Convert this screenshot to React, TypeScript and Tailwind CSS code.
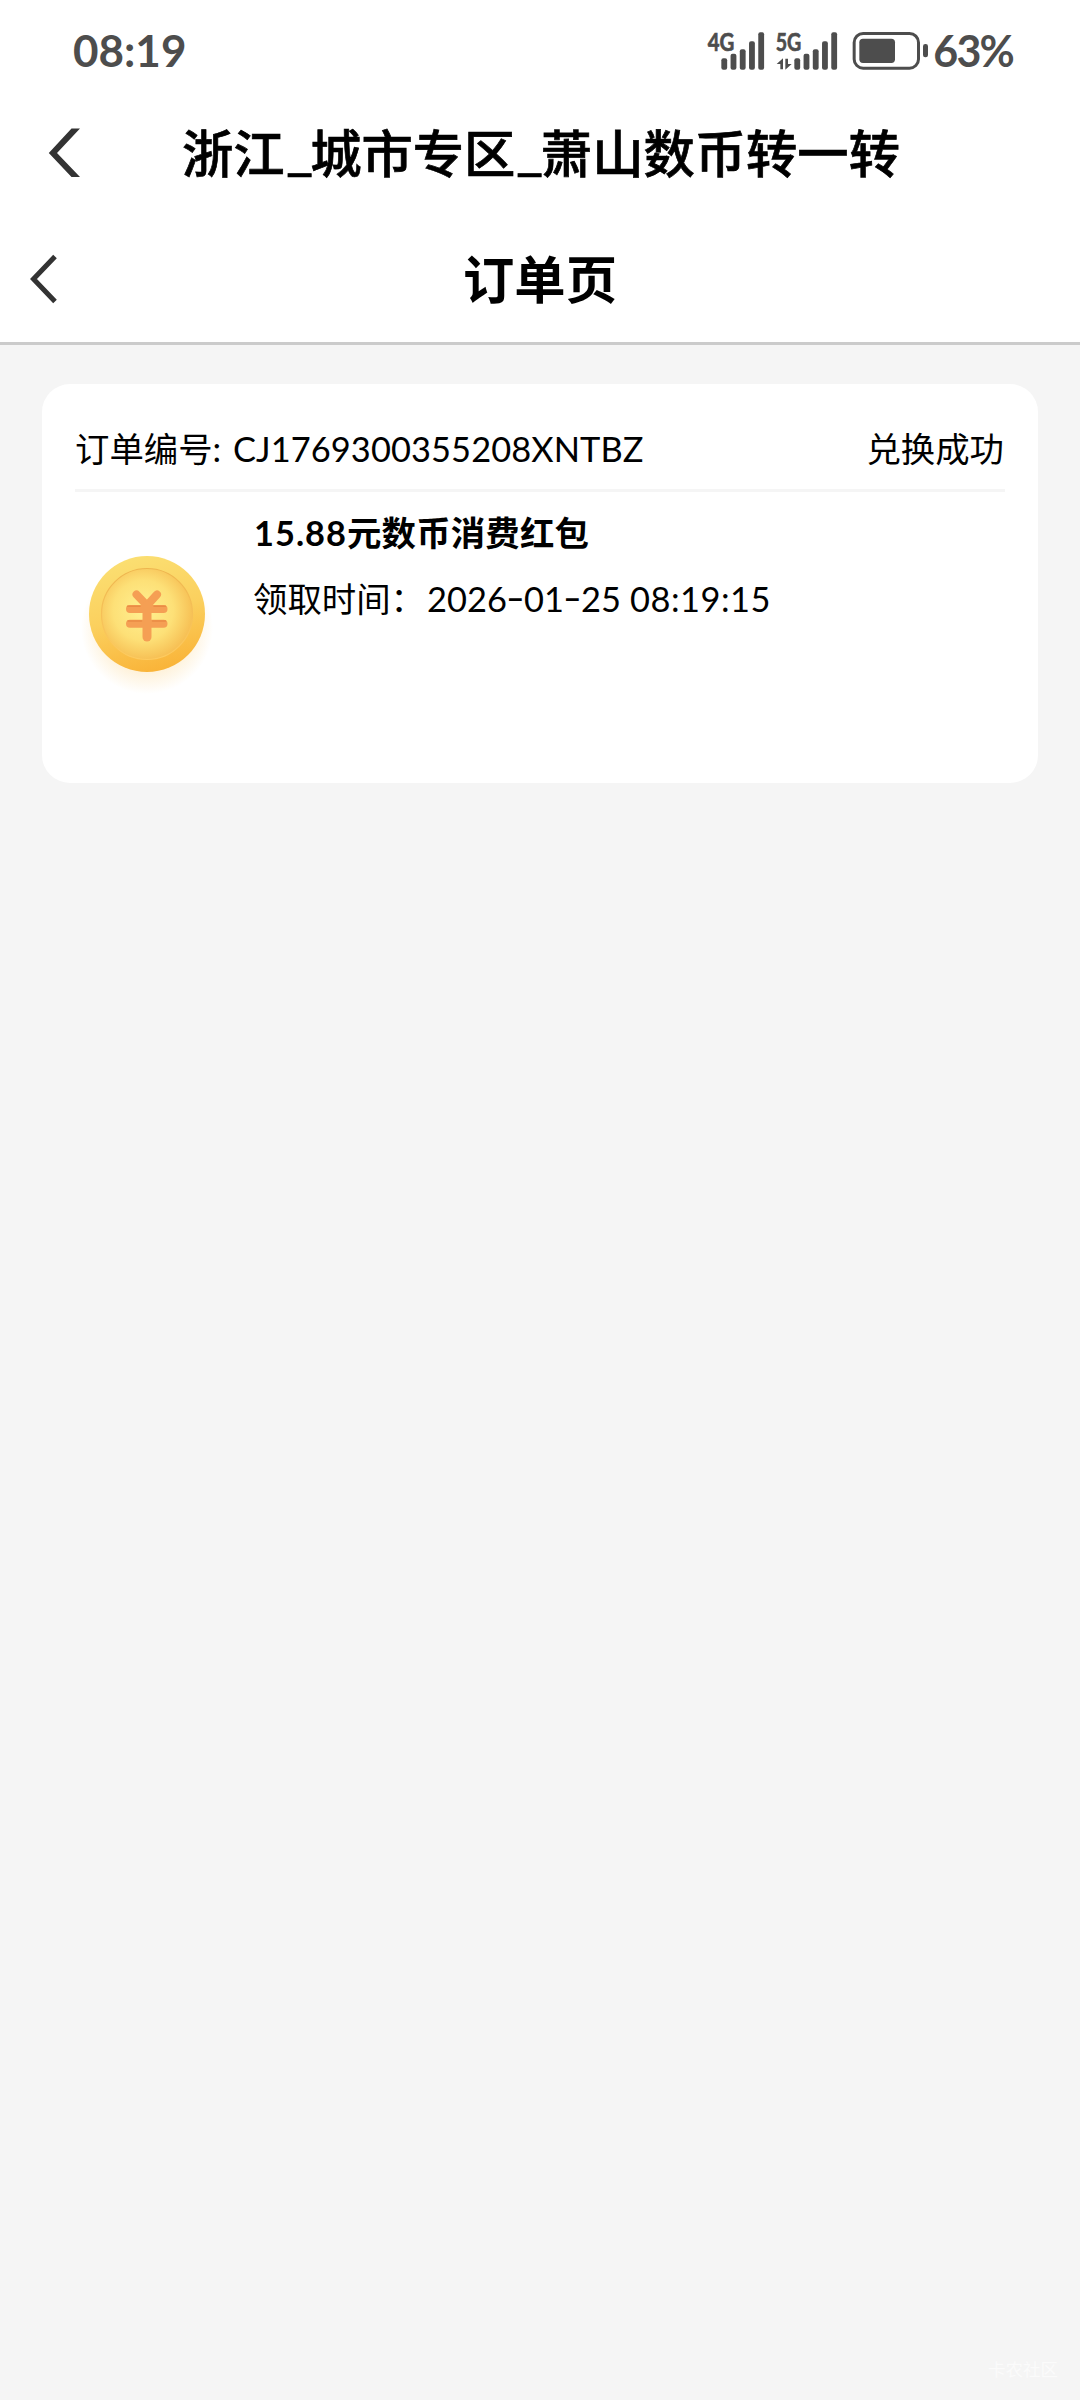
import type { ReactNode } from 'react';

const barTops = [144, 130, 117, 93, 66];

const order = {
  id: 'CJ1769300355208XNTBZ',
  status: '兑换成功',
  title: { amount: '15.88', name: '元数币消费红包' },
  date: ['2026', '01', '25'],
  time: '08:19:15',
};

function SignalBars({ x }: { x: number }) {
  return (
    <g>
      {barTops.map((top, i) => (
        <rect key={top} x={x + i * 27.7} y={top} width={17.5} height={178 - top} rx={6} />
      ))}
    </g>
  );
}

function StatusIcons() {
  return (
    <svg className="h-[60px] w-[240px]" viewBox="45 20 720 180" fill="#4d4d4d">
      <g stroke="#4d4d4d" strokeWidth={2} fontSize={76} fontWeight={700} fontFamily="Lato, sans-serif">
        <text x={53} y={121} textLength={80} lengthAdjust="spacingAndGlyphs">4G</text>
        <text x={257} y={121} textLength={77} lengthAdjust="spacingAndGlyphs">5G</text>
      </g>
      <SignalBars x={94} />
      <path d="M279 144 L260 161 H271 V177 H279 Z M286 145 V178 L305 161 H294 V145 Z" />
      <SignalBars x={313} />
      <rect x={492.5} y={69.5} width={193} height={104} rx={27} fill="none" stroke="#4d4d4d" strokeWidth={9} />
      <rect x={508} y={85} width={107} height={73} rx={11} />
      <rect x={699} y={101} width={15} height={40} rx={7} />
    </svg>
  );
}

function StatusBar() {
  return (
    <div className="flex h-[90px] items-start justify-between pl-[73px] pr-[67px] pt-[17px] text-[#4d4d4d]">
      <span className="pt-[5px] text-[44px] leading-[56px] font-bold">08:19</span>
      <div className="flex">
        <StatusIcons />
        <span className="-ml-[12px] pt-[6px] text-[43px] leading-[56px] font-bold tracking-[-1.8px]">63%</span>
      </div>
    </div>
  );
}

function NavBar({ icon, children }: { icon: ReactNode; children: ReactNode }) {
  return (
    <div className="grid h-[126px] grid-cols-[120px_1fr_120px] items-center">
      {icon}
      <h1 className="text-center text-[51.3px] leading-[72px] whitespace-nowrap text-black">{children}</h1>
    </div>
  );
}

function Underscore() {
  return <span className="inline-block w-[25.5px] origin-left -translate-y-[4px] scale-x-115">_</span>;
}

function Hyphen() {
  return <span className="mx-[2px] inline-block -translate-y-[2px] scale-x-150">-</span>;
}

function CoinIcon() {
  return (
    <svg className="h-[160px] w-[140px]" viewBox="0 0 140 160">
      <defs>
        <linearGradient id="rim" x1="0.35" y1="0" x2="0.6" y2="1">
          <stop offset="0" stopColor="#fbdf72" />
          <stop offset="0.5" stopColor="#fbd05e" />
          <stop offset="1" stopColor="#f9b338" />
        </linearGradient>
        <linearGradient id="edge" x1="0" y1="0" x2="0" y2="1">
          <stop offset="0" stopColor="#eeb54e" />
          <stop offset="1" stopColor="#fdcb60" />
        </linearGradient>
        <radialGradient id="face" cx="0.46" cy="0.46" r="0.6">
          <stop offset="0" stopColor="#fff091" />
          <stop offset="0.55" stopColor="#fde077" />
          <stop offset="1" stopColor="#f5b84c" />
        </radialGradient>
        <radialGradient id="glow">
          <stop offset="0.55" stopColor="#fbbf4c" stopOpacity="0.28" />
          <stop offset="1" stopColor="#fbbf4c" stopOpacity="0" />
        </radialGradient>
      </defs>
      <ellipse cx="72" cy="88" rx="66" ry="66" fill="url(#glow)" />
      <circle cx="72" cy="74" r="58" fill="url(#rim)" />
      <circle cx="72" cy="74" r="45.5" fill="url(#face)" stroke="url(#edge)" strokeWidth="1.2" />
      <g fill="none" stroke="#f59f54" strokeLinecap="round" strokeLinejoin="round">
        <path d="M61.5 54.5 L72 65.5 L82 54.5" strokeWidth="8" />
        <path d="M55 69 H88.5 M55 83.8 H88.5" strokeWidth="8" />
        <path d="M72 66 V97" strokeWidth="9" />
      </g>
      <path d="M52.5 66.3 H65 M79 66.3 H90.5 M53 81 H66.5 M77.5 81 H90.5" stroke="#ea8c44" strokeWidth="1.4" strokeLinecap="round" />
    </svg>
  );
}

function OrderCard() {
  return (
    <section className="mx-[42px] h-[399px] rounded-[28px] bg-white px-[33px] text-[34.4px] leading-[50px] text-black">
      <div className="flex h-[108px] items-center justify-between border-b-[3px] border-[#f5f5f5] pt-[25px]">
        <span>订单编号: <span className="ml-[3px] tracking-[0.1px]">{order.id}</span></span>
        <span className="mr-px">{order.status}</span>
      </div>
      <div className="flex">
        <div className="pt-[48px]">
          <CoinIcon />
        </div>
        <div className="flex flex-col pl-[38px] pt-[16px]">
          <p className="font-bold">
            <span className="ml-px tracking-[1px]">{order.title.amount}</span>
            <span className="tracking-[0.2px]">{order.title.name}</span>
          </p>
          <p className="pt-[16px]">
            领取时间：
            <span className="ml-[2px] tracking-[0.1px]">
              {order.date[0]}<Hyphen />{order.date[1]}<Hyphen />{order.date[2]}{' '}
            </span>
            <span className="tracking-[0.5px]">{order.time}</span>
          </p>
        </div>
      </div>
    </section>
  );
}

export default function App() {
  return (
    <div className="flex h-[2400px] w-[1080px] flex-col bg-[#f5f5f5] font-[Lato,'Noto_Sans_CJK_SC',sans-serif]">
      <header className="h-[345px] border-b-[3px] border-[#cbcbcb] bg-white">
        <StatusBar />
        <NavBar
          icon={
            <svg className="ml-[48px] h-[50px] w-[34px]" viewBox="0 0 34 50" fill="#333">
              <path d="M23.5 0.5 H32 L9 25 L32 49 H23.5 L0.8 25 Z" />
            </svg>
          }
        >
          <span className="ml-[2px] font-medium [-webkit-text-stroke:0.7px_black]">浙江<Underscore />城市专区<Underscore />萧山数币转一转</span>
        </NavBar>
        <NavBar
          icon={
            <svg className="ml-[28px] h-[50px] w-[34px]" viewBox="0 0 34 50" fill="none" stroke="#333" strokeWidth="5">
              <path d="M27 2.5 L5.5 25 L27 47.5" />
            </svg>
          }
        >
          <span className="font-bold">订单页</span>
        </NavBar>
      </header>
      <main className="flex-1 pt-[39px]">
        <OrderCard />
      </main>
      <footer className="flex justify-end pr-[22px] pb-[17px] text-[17.5px] leading-[26px] text-[#fbfbfb]">卡农社区</footer>
    </div>
  );
}
